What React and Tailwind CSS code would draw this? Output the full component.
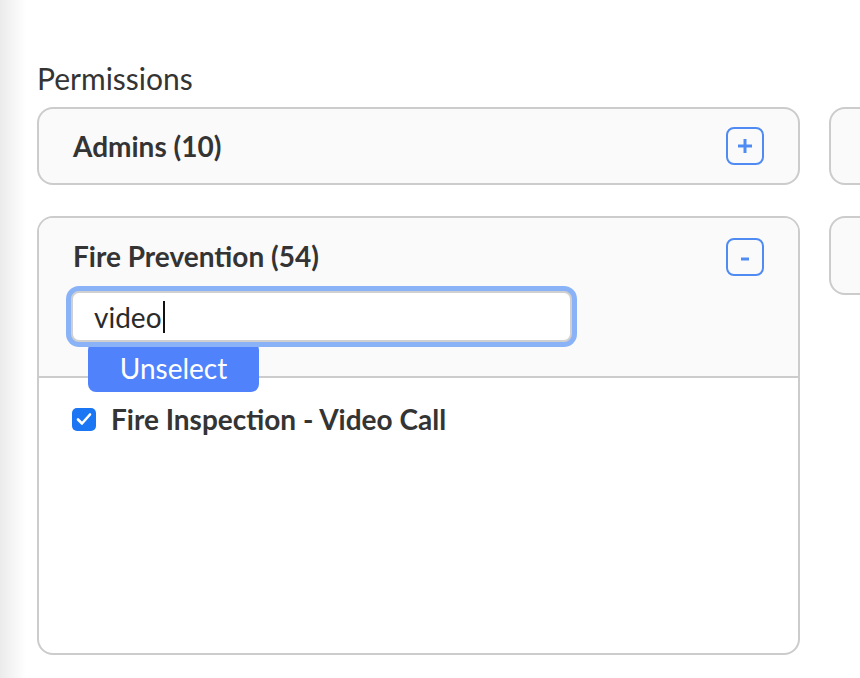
import React from "react";

function IconButton({ kind }) {
  return (
    <div className="w-[38px] h-[38px] shrink-0 rounded-[8px] border-2 border-[#4f8bf2] flex items-center justify-center">
      {kind === "plus" ? (
        <svg width="14" height="14" viewBox="0 0 14 14">
          <rect x="5.5" y="0" width="3" height="14" fill="#4f8bf2" />
          <rect x="0" y="5.5" width="14" height="3" fill="#4f8bf2" />
        </svg>
      ) : (
        <svg width="8" height="8" viewBox="0 0 8 8" className="mt-[3px]">
          <rect x="0" y="2.5" width="8" height="3" fill="#4f8bf2" />
        </svg>
      )}
    </div>
  );
}

function SmallCard({ h }) {
  return <div className={`${h} rounded-[16px] border-2 border-[#cccccc] bg-[#fafafa]`} />;
}

export default function App() {
  return (
    <div className="flex w-[860px] h-[678px] overflow-hidden bg-white text-[#343434] font-['Lato',sans-serif]">
      <div className="w-[26px] shrink-0 bg-gradient-to-r from-[#ebebeb] to-white" />
      <div className="pl-[11px] pt-[63px]">
        <h2 className="text-[30px] leading-[30px] font-normal">Permissions</h2>
        <div className="mt-[14px] grid grid-cols-[763px_763px] gap-x-[29px] gap-y-[31px] items-start">
          <div className="h-[78px] rounded-[16px] border-2 border-[#cccccc] bg-[#fafafa] flex items-center justify-between pl-[34px] pr-[34px]">
            <span className="text-[28px] font-bold leading-none">Admins (10)</span>
            <IconButton kind="plus" />
          </div>
          <SmallCard h="h-[78px]" />

          <div className="h-[439px] rounded-[16px] border-2 border-[#cccccc] bg-white flex flex-col">
            <div className="relative h-[158px] shrink-0 rounded-t-[14px] bg-[#fafafa] pt-[20px] pl-[34px] pr-[34px]">
              <div className="h-[38px] flex items-center justify-between">
                <span className="text-[28px] font-bold leading-none mt-[-2px]">Fire Prevention (54)</span>
                <IconButton kind="minus" />
              </div>
              <div className="relative z-20 mt-[15px] ml-[-2px] w-[501px] h-[51px] rounded-[8px] border-2 border-[#d0d0d0] bg-white shadow-[0_0_0_5px_#8ab3f7] flex items-center pl-[21px]">
                <span className="text-[28px] leading-none text-[#2a2a2a]">video</span>
                <span className="ml-[1px] w-[2px] h-[32px] bg-[#111]" />
              </div>
              <div className="relative z-10 ml-[15px] w-[171px] h-[50px] rounded-[8px] bg-[#5083fb] flex items-center justify-center pt-[1px]">
                <span className="text-[28px] leading-none text-white">Unselect</span>
              </div>
            </div>
            <div className="flex-1 border-t-2 border-[#cccccc] pt-[27px] pl-[33px]">
              <div className="flex items-center gap-[15px]">
                <div className="w-[24px] h-[23px] rounded-[5px] bg-[#1a76f2] flex items-center justify-center">
                  <svg width="16" height="14" viewBox="0 0 16 14">
                    <path d="M2 7.5 L6 11.5 L14 2.5" stroke="white" strokeWidth="2.6" fill="none" strokeLinecap="round" strokeLinejoin="round" />
                  </svg>
                </div>
                <span className="text-[28px] font-bold leading-none">Fire Inspection - Video Call</span>
              </div>
            </div>
          </div>
          <SmallCard h="h-[79px]" />
        </div>
      </div>
    </div>
  );
}
